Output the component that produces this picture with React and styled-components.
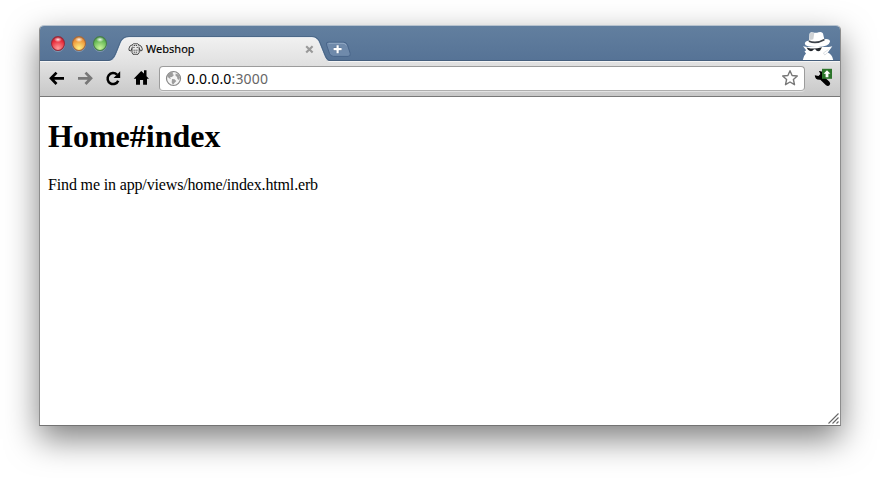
import React from "react";
import styled, { createGlobalStyle } from "styled-components";

const GlobalStyle = createGlobalStyle`
  * { box-sizing: border-box; }
  body { margin: 0; background: #fff; overflow: hidden; }
  svg { display: block; flex: none; }
`;

const Desktop = styled.div`
  width: 880px;
  height: 480px;
  padding: 25px 39px 54px;
`;

const Window = styled.main`
  display: flex;
  flex-direction: column;
  width: 802px;
  height: 401px;
  border: 1px solid #8d8d8d;
  border-top-color: #b7c3cf;
  border-bottom-color: #737373;
  border-radius: 5px 5px 0 0;
  background: #fff;
  box-shadow: 0 13px 33px rgba(0, 0, 0, 0.5);
`;

const TitleBar = styled.header`
  display: flex;
  height: 35px;
  flex: none;
  border-radius: 4px 4px 0 0;
  border-bottom: 1px solid #465f7d;
  background: linear-gradient(#627f9f, #567396);
`;

const Lights = styled.div`
  display: flex;
  gap: 7px;
  width: 68px;
  flex: none;
  padding: 10px 0 0 11px;
`;

const Light = styled.span`
  width: 14px;
  height: 15px;
  flex: none;
  border-radius: 50%;
  border: 1px solid ${(p) => p.$rim};
  background:
    radial-gradient(ellipse 4px 2.5px at 50% 20%, rgba(255, 255, 255, 0.9), transparent),
    radial-gradient(circle at 50% 85%, ${(p) => p.$glow} 0, ${(p) => p.$color} 65%, ${(p) => p.$rim} 110%);
  box-shadow: 0 1px 0 rgba(255, 255, 255, 0.25);
`;

const Tab = styled.div`
  display: grid;
  width: 222px;
  height: 36px;
  flex: none;
  z-index: 1;

  > * { grid-area: 1 / 1; }
`;

const TabContent = styled.div`
  z-index: 1;
  display: flex;
  align-items: center;
  height: 24px;
  margin-top: 11px;
  padding: 0 16px 0 20px;
`;

const TabTitle = styled.span`
  flex: 1;
  margin-left: 3px;
  font: 11px/16px "Noto Sans", sans-serif;
  letter-spacing: 0.02px;
  color: #000;
  -webkit-text-stroke: 0.15px #000;
`;

const NewTab = styled.div`
  margin: 15px 0 0 -5px;
`;

const Incognito = styled.div`
  margin: 5px 6px 0 auto;
`;

const Toolbar = styled.nav`
  display: flex;
  height: 36px;
  flex: none;
  align-items: center;
  padding: 0 8px 2px 9px;
  border-top: 1px solid #f5f5f5;
  border-bottom: 1px solid #787878;
  background: linear-gradient(#e2e2e2, #c8c8c8);
`;

const Actions = styled.div`
  display: flex;
  gap: 12px;
  width: 110px;
  flex: none;
`;

const AddressBar = styled.div`
  display: flex;
  align-items: center;
  width: 646px;
  height: 25px;
  margin-top: 1px;
  border: 1px solid #9c9c9c;
  border-bottom-color: #aeaeae;
  border-radius: 4px;
  background: #fff;
  padding: 0 5px;
  box-shadow: 0 1px 0 rgba(255, 255, 255, 0.45);
`;

const Address = styled.span`
  flex: 1;
  margin-left: 5px;
  font: 14px/19px "Noto Sans", sans-serif;
  letter-spacing: 0.17px;
  color: #000;
`;

const Port = styled.span`
  color: #666;
`;

const Tools = styled.div`
  margin-left: 9px;
`;

const Page = styled.section`
  display: flex;
  flex: 1;
  flex-direction: column;
  padding: 21px 8px 0;
  font-family: "Liberation Serif", serif;
  color: #000;
`;

const Heading = styled.h1`
  margin: 0;
  font-size: 32px;
  line-height: 37px;
`;

const Text = styled.p`
  margin: 21px 0 0;
  font-size: 16px;
  line-height: 18px;
  letter-spacing: -0.15px;
`;

const Grip = styled.div`
  margin: auto -8px 0 auto;
`;

function TabShape() {
  return (
    <svg width="222" height="36" viewBox="0 0 222 36">
      <defs>
        <linearGradient id="tab" x1="0" y1="0" x2="0" y2="1">
          <stop offset="0" stopColor="#f1f1f1" />
          <stop offset="1" stopColor="#e2e2e2" />
        </linearGradient>
      </defs>
      <path
        d="M0 36V35.5C5 35 7 32 9 27L13 17Q15 11.5 21 11.5H204Q209 11.5 211 17L215 27C217 32 218 35 222 35.5V36Z"
        fill="url(#tab)"
      />
      <path
        d="M0 35.5C5 35 7 32 9 27L13 17Q15 11.5 21 11.5H204Q209 11.5 211 17L215 27C217 32 218 35 222 35.5"
        fill="none"
        stroke="#fff"
        strokeOpacity=".7"
      />
      <path
        d="M0 34.5C4 34 6 31 8 26.5L12 16.5Q14 10.5 21 10.5H204Q210 10.5 212 16.5L216 26.5C218 31 219 34 222 34.5"
        fill="none"
        stroke="#3f5b7c"
        strokeOpacity=".6"
      />
    </svg>
  );
}

function DogIcon() {
  return (
    <svg width="15" height="12" viewBox="0 0 15 12" fill="none" stroke="#222" strokeWidth=".8">
      <path d="M4 2 5.5 .8H9.7L11 2 13 3 14.2 5.5V7.3L12.5 8 11.2 5.2V9.5L10 11.3H5L4 9.5V5.2L2.8 8 1 7.3V5.5L2 3Z" />
      <path strokeDasharray="1.3 .7" d="M5.3 4.4H7M8.6 4.4H10.3M5.5 7.2H10M5.7 9.2H9.8M5.8 2.5H9.5M4 5 4.8 2.5M11.2 5 10.6 2.5" />
    </svg>
  );
}

function CloseIcon() {
  return (
    <svg width="9" height="9" viewBox="0 0 9 9">
      <path d="m1.2 1.2 6.4 6.4M7.6 1.2 1.2 7.6" stroke="#999" strokeWidth="2.1" />
    </svg>
  );
}

function NewTabIcon() {
  return (
    <svg width="27" height="17" viewBox="0 0 27 17">
      <path
        d="M3 1.2H18.5Q21.5 1.2 22.5 4L25.2 12.3Q26 15.4 23 15.4H8.5Q5.5 15.4 4.5 12.5L1.6 4Q.7 1.2 3 1.2Z"
        fill="#6f8aab"
        stroke="#48658a"
      />
      <path d="M3.5 2.3H18Q20.5 2.3 21.3 4.5" fill="none" stroke="#91a8c3" />
      <path d="M12.6 4.2V12.2M8.6 8.2H16.6" stroke="#405b7d" strokeWidth="3.4" opacity=".5" />
      <path d="M12.6 4.2V12.2M8.6 8.2H16.6" stroke="#fff" strokeWidth="2.2" />
    </svg>
  );
}

function IncognitoIcon() {
  return (
    <svg width="32" height="29" viewBox="0 0 32 29">
      <path d="M1 15.2 5 16 27 16 30.3 15.2 25.8 21.5Q30.4 23.5 31.2 29H.8Q1.2 25 4 22.5L2.5 20.5 4.2 19.3Z" fill="#fff" />
      <path d="M7.5 2.8Q8 .5 11 1.4 14 2.3 16.5 1.3 20 .3 21 2.5L22.3 8.2Q28 7.5 28 10.8 27 15.5 16 16 3.2 16.2 2.8 12.7 3 10 7 9.5Z" fill="#fff" />
      <path d="M7.8 2.5Q9 1 12.3 2L11.3 8.3Q9 9 7.2 8.8Z" fill="#cfd2d5" />
      <path d="M6.8 9.2Q14 12.6 22.3 7.8L22.6 9.6Q14 14.3 6.7 11Z" fill="#3c424a" />
      <path d="M4.5 16.4Q9 17.6 12 17.6T20 16.3L18 19.8Q15 21.2 13.3 18.3H12Q9.2 21.8 6 18.7Z" fill="#22272d" />
      <path d="m25.8 21.5-3 2.5-1.4-2 5-3.4" fill="none" stroke="#c5cbd2" strokeWidth=".6" />
    </svg>
  );
}

function BackIcon({ color = "#000", flip }) {
  return (
    <svg width="16" height="16" viewBox="0 0 16 16" fill="none" stroke={color} strokeWidth="2.7">
      <path d={flip ? "M1 8.3H14M8.5 2.6 14 8.3 8.5 14" : "M15 8.3H2M7.5 2.6 2 8.3 7.5 14"} />
    </svg>
  );
}

function ReloadIcon() {
  return (
    <svg width="16" height="16" viewBox="0 0 16 16">
      <path d="M12 4.7A5.5 5.5 0 1 0 13.2 10.7" fill="none" stroke="#000" strokeWidth="2.5" />
      <path d="M15.2 1.3V7.9H8.6Z" />
    </svg>
  );
}

function HomeIcon() {
  return (
    <svg width="17" height="16" viewBox="0 0 17 16">
      <path d="M.7 8.7 8.2.9 11 3.6V.3H13.5V6.2L16 8.7H14V14.8H10.1V10H7V14.8H3V8.7Z" />
    </svg>
  );
}

function GlobeIcon() {
  return (
    <svg width="17" height="17" viewBox="0 0 17 17">
      <circle cx="8.5" cy="8.5" r="7" fill="#f5f5f5" stroke="#888" strokeWidth="1.2" />
      <path d="M3 4 6 2 8.5 2.5 7.5 4 9 5 7 7 5 7.2 6 9 4 8.3 2.5 6.5ZM7 9 9.5 9.3 11.3 11 9.2 13.2 8 15 6.7 12.5ZM10.5 3.5 13.5 4.5 15 7.5 14 10 12.4 9 12 6.8 10.6 6Z" fill="#9d9d9d" />
    </svg>
  );
}

function StarIcon() {
  return (
    <svg width="18" height="19" viewBox="0 0 18 19">
      <path
        d="M9 1.7 11.1 6.5 16.3 7 12.4 10.5 13.5 15.7 9 13 4.5 15.7 5.6 10.5 1.7 7 6.9 6.5Z"
        fill="#fff"
        stroke="#777"
        strokeWidth="1.4"
        strokeLinejoin="round"
      />
    </svg>
  );
}

function WrenchIcon() {
  return (
    <svg width="18" height="20" viewBox="0 0 18 20">
      <path
        d="M5 3 6.4 6 4.5 8 .8 7.2Q1 12.3 6.3 11.8L12 17.2Q14 18.8 15.7 17.1 17 15.3 15.2 13.6L10.6 9.3V6Q8.5 2.7 5 3Z"
        fill="#000"
      />
      <rect x="8" y="0.8" width="10" height="10" fill="#2c752b" />
      <path d="M13 2.2 16.4 5.8H14.4V9.2H11.6V5.8H9.6Z" fill="#fff" />
    </svg>
  );
}

function GripIcon() {
  return (
    <svg width="13" height="13" viewBox="0 0 13 13" stroke="#666" strokeWidth="1.1">
      <path d="M1.5 11.5 11.5 1.5M5.5 11.5 11.5 5.5M9.5 11.5 11.5 9.5" />
    </svg>
  );
}

export default function App() {
  return (
    <>
      <GlobalStyle />
      <Desktop>
        <Window>
          <TitleBar>
            <Lights>
              <Light $rim="#922b3b" $color="#e52635" $glow="#ff9a9a" />
              <Light $rim="#a4683c" $color="#ed9538" $glow="#fff083" />
              <Light $rim="#477c4b" $color="#61b552" $glow="#c9f59a" />
            </Lights>
            <Tab>
              <TabShape />
              <TabContent>
                <DogIcon />
                <TabTitle>Webshop</TabTitle>
                <CloseIcon />
              </TabContent>
            </Tab>
            <NewTab>
              <NewTabIcon />
            </NewTab>
            <Incognito>
              <IncognitoIcon />
            </Incognito>
          </TitleBar>
          <Toolbar>
            <Actions>
              <BackIcon />
              <BackIcon color="#777" flip />
              <ReloadIcon />
              <HomeIcon />
            </Actions>
            <AddressBar>
              <GlobeIcon />
              <Address>
                0.0.0.0<Port>:3000</Port>
              </Address>
              <StarIcon />
            </AddressBar>
            <Tools>
              <WrenchIcon />
            </Tools>
          </Toolbar>
          <Page>
            <Heading>Home#index</Heading>
            <Text>Find me in app/views/home/index.html.erb</Text>
            <Grip>
              <GripIcon />
            </Grip>
          </Page>
        </Window>
      </Desktop>
    </>
  );
}
